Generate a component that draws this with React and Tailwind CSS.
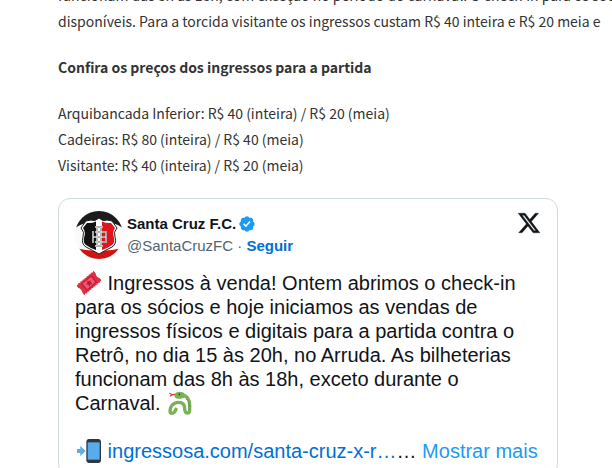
function Avatar() {
  return (
    <svg viewBox="0 0 48 48" className="size-12 shrink-0 rounded-full" role="img" aria-label="Santa Cruz F.C.">
      <rect width="48" height="48" fill="#fafafa" />
      <path d="M0 0h48v17Q24 2 0 17z" fill="#1d1b1c" />
      <path d="M0 37q24 6 48 0v11H0z" fill="#cf1418" />
      <path d="M24 7q4 4 8 2l5 1 5 7q-4 4-2 9 2 7-3 10-6 3-13 7-7-4-13-7-5-3-3-10 2-5-2-9l5-7 5-1q4 2 8-2z" fill="#fff" stroke="#222" strokeWidth="1" />
      <path d="M21 10.500q-4 2-9 1.500l-4 5q3 4 1 10-1 5 2 7 4 3 10 5z" fill="#111" />
      <path d="M27 10.500q4 2 9 1.500l4 5q-3 4-1 10 1 5-2 7-4 3-10 5z" fill="#e3131b" />
      <g fill="none">
        <path d="M18 20v12M31 20v12M18 26h13M22 16v19M26 16v19M20 16h8M20 35h8M30 21h-10M30 31h-10" stroke="#666" strokeWidth="1.800" />
        <path d="M18 20v12M31 20v12M18 26h13M22 16v19M26 16v19M20 16h8M20 35h8M30 21h-10M30 31h-10" stroke="#fff" strokeWidth="0.900" />
      </g>
    </svg>
  );
}

function Verified() {
  return (
    <svg viewBox="0 0 22 22" className="size-[18px] shrink-0" role="img" aria-label="Conta verificada">
      <path fill="#1d9bf0" d="M20.396 11c-.018-.646-.215-1.275-.57-1.816-.354-.54-.852-.972-1.438-1.246.223-.607.27-1.264.14-1.897-.131-.634-.437-1.218-.882-1.687-.47-.445-1.053-.75-1.687-.882-.633-.13-1.29-.083-1.897.14-.273-.587-.704-1.086-1.245-1.44S11.647 1.62 11 1.604c-.646.017-1.273.213-1.813.568s-.969.854-1.24 1.44c-.608-.223-1.267-.272-1.902-.14-.635.13-1.22.436-1.69.882-.445.47-.749 1.055-.878 1.688-.13.633-.08 1.29.144 1.896-.587.274-1.087.705-1.443 1.245-.356.54-.555 1.17-.574 1.817.02.647.218 1.276.574 1.817.356.54.856.972 1.443 1.245-.224.606-.274 1.263-.144 1.896.13.634.433 1.218.877 1.688.47.443 1.054.747 1.687.878.633.132 1.29.084 1.897-.136.274.586.705 1.084 1.246 1.439.54.354 1.17.551 1.816.569.647-.016 1.276-.213 1.817-.567s.972-.854 1.245-1.44c.604.239 1.266.296 1.903.164.636-.132 1.22-.447 1.68-.907.46-.46.776-1.044.908-1.681s.075-1.299-.165-1.903c.586-.274 1.084-.705 1.439-1.246.354-.54.551-1.17.569-1.816zM9.662 14.85l-3.429-3.428 1.293-1.302 2.072 2.072 4.4-4.794 1.347 1.246z" />
    </svg>
  );
}

function XLogo() {
  return (
    <svg viewBox="0 0 24 24" className="size-6" aria-hidden="true">
      <path fill="#0f1419" stroke="#0f1419" strokeWidth="0.400" d="M18.244 2.25h3.308l-7.227 8.26 8.502 11.24H16.17l-5.214-6.817L4.99 21.75H1.68l7.73-8.835L1.254 2.25H8.08l4.713 6.231zm-1.161 17.52h1.833L7.084 4.126H5.117z" />
    </svg>
  );
}

function Ticket() {
  return (
    <svg viewBox="0 0 36 36" className="mr-px ml-0.5 inline-block size-6 align-top" role="img" aria-label="ingresso">
      <g transform="rotate(-40 18 18)">
        <path fill="#dd2e44" d="M1 8l2.500 1.500L6 8l2 1.500L10 8l2 1.500L14 8l2 1.500L18 8l2 1.500L22 8l2 1.500L26 8l2 1.500L30 8l2.500 1.500L35 8v5q-3 5 0 10v5l-2.500-1.500L30 28l-2-1.500-2 1.500-2-1.500-2 1.500-2-1.500-2 1.500-2-1.500-2 1.500-2-1.500-2 1.500-2-1.500-2 1.500-2.500-1.500L1 28v-5q3-5 0-10z" />
        <path fill="#ea596e" stroke="#be1931" strokeWidth="1.500" d="M9 12h18v12H9z" />
        <path fill="#be1931" d="M18 13l1.500 3.300 3.500.4-2.600 2.400.7 3.500-3.100-1.800-3.100 1.800.7-3.500-2.600-2.400 3.500-.4z" />
      </g>
    </svg>
  );
}

function Snake() {
  return (
    <svg viewBox="0 0 36 36" className="mr-px ml-0.5 inline-block size-6 align-top" role="img" aria-label="cobra">
      <path d="M12 5L7 5.500 2 3.500M7 5.500L3 8" fill="none" stroke="#dd2e44" strokeWidth="1.700" />
      <path d="M20 6c8 0 12.500 7 12.500 15v7c0 3-1 5-3.500 5S25 31 25 26c0-6-3-9-9-9-8 0-13 6-13 13 0 3 1 3.500 3 3.500 4 0 5-3 6-6" fill="none" stroke="#77b255" strokeWidth="5" strokeLinecap="round" />
      <path d="M10 6c1-4 6-6 12-4 4 2 5 6 2 8-4 2-11 2-13 0-1-1-2-2-1-4z" fill="#77b255" />
      <path d="M28 12q5 6 4 15" fill="none" stroke="#5c913b" strokeWidth="1.500" strokeDasharray="3 2" />
      <circle cx="17" cy="5" r="1.300" fill="#292f33" />
    </svg>
  );
}

function Phone() {
  return (
    <svg viewBox="0 0 36 36" className="mr-px ml-0.5 inline-block size-6 align-top" role="img" aria-label="celular">
      <path fill="#31373d" d="M36 32c0 2.200-1.800 4-4 4H18c-2.200 0-4-1.800-4-4V4c0-2.200 1.800-4 4-4h14c2.200 0 4 1.800 4 4z" />
      <path fill="#55acee" d="M16 5h18v26H16z" />
      <path fill="#5dadec" d="M0 15h5v-5l8 8-8 8v-5H0z" />
    </svg>
  );
}

function Tweet() {
  return (
    <article className="mt-5 max-w-[500px] rounded-xl border border-[#cfd9de] bg-white px-4 py-3 font-['Liberation_Sans',Arial,sans-serif] text-[#0f1419]">
      <header className="flex items-start">
        <Avatar />
        <div className="ml-1 flex-1 pt-[3px] text-[15px] leading-5">
          <div className="flex items-center gap-0.5 font-bold">
            <a href="#perfil" className="hover:underline">Santa Cruz F.C.</a>
            <Verified />
          </div>
          <div className="mt-0.5 text-[#536471]">
            <a href="#perfil">@SantaCruzFC</a> ·{' '}
            <a href="#seguir" className="font-bold text-[#006fd6] hover:underline">Seguir</a>
          </div>
        </div>
        <a href="#x" aria-label="Ver no X"><XLogo /></a>
      </header>
      <p className="mt-3 text-xl leading-6">
        <Ticket /> Ingressos à venda! Ontem abrimos o check-in para os sócios e hoje iniciamos as vendas de ingressos físicos e digitais para a partida contra o Retrô, no dia 15 às 20h, no Arruda. As bilheterias funcionam das 8h às 18h, exceto durante o Carnaval. <Snake />
      </p>
      <p className="mt-6 text-xl leading-6">
        <Phone /> <a href="#ingressos" className="text-[#006fd6] hover:underline">ingressosa.com/santa-cruz-x-r…</a>…{' '}
        <a href="#mais" className="text-[#1d9bf0] hover:underline">Mostrar mais</a>
      </p>
    </article>
  );
}

export default function App() {
  return (
    <main className="h-screen overflow-hidden bg-white">
      <div className="-mt-[18px] pl-[58px] font-['Noto_Sans_CJK_SC','Open_Sans',sans-serif] text-sm leading-[26px] text-[#333]">
        <p className="whitespace-nowrap">
          funcionam das 8h às 18h, com exceção no período do carnaval. O check-in para os sócios
          <br />
          disponíveis. Para a torcida visitante os ingressos custam R$ 40 inteira e R$ 20 meia e
        </p>
        <p className="mt-5 font-bold">Confira os preços dos ingressos para a partida</p>
        <p className="mt-5">
          Arquibancada Inferior: R$ 40 (inteira) / R$ 20 (meia)
          <br />
          Cadeiras: R$ 80 (inteira) / R$ 40 (meia)
          <br />
          Visitante: R$ 40 (inteira) / R$ 20 (meia)
        </p>
        <Tweet />
      </div>
    </main>
  );
}
